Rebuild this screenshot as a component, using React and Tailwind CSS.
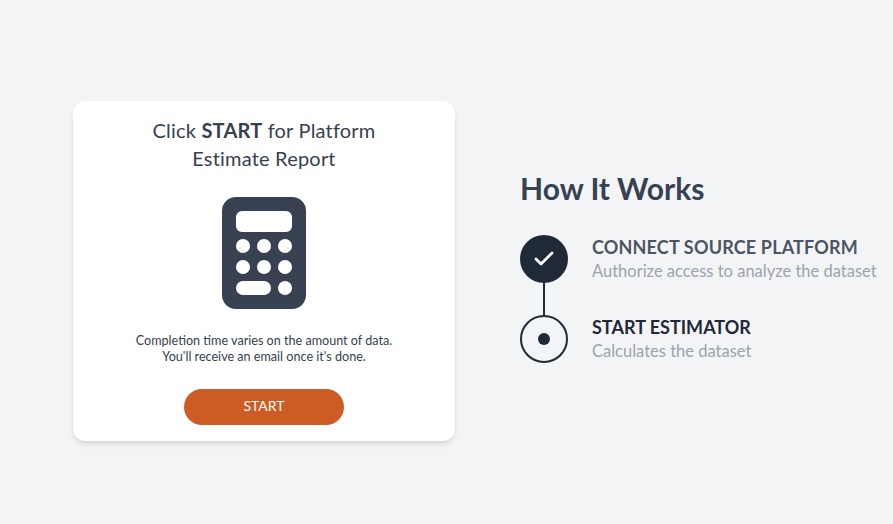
import { Check } from 'lucide-react';

function CalculatorIcon() {
    return (
        <svg width="84" height="112" viewBox="0 0 84 112" className="block">
            <rect width="84" height="112" rx="14" fill="#374151" />
            <rect x="14" y="14" width="56" height="21" rx="6" fill="#fff" />
            <circle cx="21" cy="49" r="7" fill="#fff" />
            <circle cx="42" cy="49" r="7" fill="#fff" />
            <circle cx="63" cy="49" r="7" fill="#fff" />
            <circle cx="21" cy="70" r="7" fill="#fff" />
            <circle cx="42" cy="70" r="7" fill="#fff" />
            <circle cx="63" cy="70" r="7" fill="#fff" />
            <rect x="14" y="84" width="35" height="14" rx="7" fill="#fff" />
            <circle cx="63" cy="91" r="7" fill="#fff" />
        </svg>
    );
}

export default function App() {
    return (
        <div className="flex h-[524px] items-center overflow-hidden bg-[#f3f4f6] pl-[73px] pt-[18px] font-['Lato',sans-serif]">
            <section className="flex h-[340px] w-[382px] flex-col items-center rounded-xl bg-white px-6 pt-[15px] shadow-md">
                <h2 className="text-center text-[20px] leading-7 tracking-[0.2px] text-[#374151]">
                    Click <strong className="font-bold">START</strong> for Platform
                    <br />
                    Estimate Report
                </h2>
                <div className="mt-[25px]">
                    <CalculatorIcon />
                </div>
                <p className="mt-[24px] text-center text-[12.6px] leading-[16px] text-[#374151]">
                    Completion time varies on the amount of data.
                    <br />
                    You'll receive an email once it's done.
                </p>
                <button className="mt-[24px] h-9 w-40 rounded-full bg-[#cc5c23] pb-0.5 text-sm text-white">START</button>
            </section>

            <section className="mb-[10px] ml-[65px]">
                <h1 className="text-[30px] font-bold leading-9 text-[#374151]">How It Works</h1>
                <ol className="mt-[29px]">
                    <li className="flex gap-6">
                        <div className="flex flex-col items-center">
                            <div className="flex h-12 w-12 items-center justify-center rounded-full bg-[#1f2937]">
                                <Check size={24} strokeWidth={2.8} className="text-white" />
                            </div>
                            <div className="h-8 w-0.5 bg-[#1f2937]" />
                        </div>
                        <div>
                            <h3 className="text-[18px] font-bold leading-6 tracking-[0.17px] text-[#4b5563]">CONNECT SOURCE PLATFORM</h3>
                            <p className="text-[16.5px] leading-6 text-[#9ca3af]">Authorize access to analyze the dataset</p>
                        </div>
                    </li>
                    <li className="flex gap-6">
                        <div className="flex h-12 w-12 items-center justify-center rounded-full border-2 border-[#1f2937]">
                            <div className="h-3 w-3 rounded-full bg-[#1f2937]" />
                        </div>
                        <div>
                            <h3 className="text-[18px] font-bold leading-6 text-[#1f2937]">START ESTIMATOR</h3>
                            <p className="text-[16.5px] leading-6 text-[#9ca3af]">Calculates the dataset</p>
                        </div>
                    </li>
                </ol>
            </section>
        </div>
    );
}
